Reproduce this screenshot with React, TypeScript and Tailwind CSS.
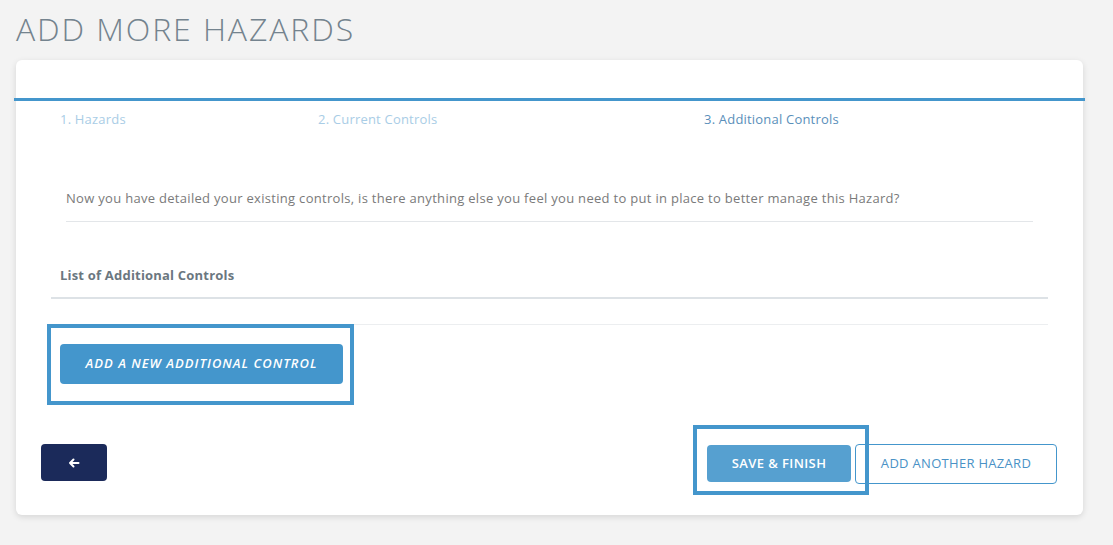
import React from "react";

const font = { fontFamily: '"Open Sans", "Noto Sans", sans-serif' };

const App = () => {
  return (
    <div className="min-h-[545px] w-[1113px] bg-[#f3f3f3] pt-[12px] pl-[16px]" style={font}>
      <h1 className="text-[32px] leading-[34px] font-light tracking-[1.9px] text-[#74838e]">
        ADD MORE HAZARDS
      </h1>

      <div className="relative mt-[14px] w-[1067px] h-[455px] rounded-[6px] bg-white shadow-[0_2px_6px_rgba(0,0,0,0.12)]">
        {/* stepper */}
        <div className="h-[38px]" />
        <div className="-mx-[2px] h-[3px] bg-[#4496cc]" />
        <div className="flex h-[37px] items-center text-[13px] tracking-[0.2px]">
          <span className="ml-[44px] w-[258px] text-[#a9cde6]">1. Hazards</span>
          <span className="w-[386px] text-[#a9cde6]">2. Current Controls</span>
          <span className="text-[#5a8fba]">3. Additional Controls</span>
        </div>

        {/* body */}
        <div className="px-[35px] pt-[51px]">
          <div className="mx-[15px] border-b border-[#e3e6e9] pb-[12px] text-[13px] text-[#7a7a7a] tracking-[0.3px]">
            Now you have detailed your existing controls, is there anything else you feel you need to put in place to better manage this Hazard?
          </div>

          <div className="mt-[44px] border-b-2 border-[#dde2e6] pb-[12px] pl-[9px] text-[13px] font-bold text-[#6b7780] tracking-[0.2px]">
            List of Additional Controls
          </div>
          <div className="mt-[25px] border-t border-[#eceef0]" />

          <div className="-ml-[4px] -mt-[1px] inline-flex border-[4px] border-[#4496cc] pl-[9px] pr-[7px] pt-[16px] pb-[17px]">
            <button className="h-[40px] w-[283px] rounded-[4px] bg-[#4496cc] text-[13px] font-semibold italic uppercase text-white tracking-[1px]">
              Add a new additional control
            </button>
          </div>

          <div className="mt-[39px] flex items-start">
            <button className="-ml-[10px] flex h-[37px] w-[66px] items-center justify-center rounded-[4px] bg-[#1b2a5a] text-white">
              <svg width="12" height="12" viewBox="0 0 12 12" fill="none" stroke="white" strokeWidth="2" strokeLinecap="round" strokeLinejoin="round">
                <path d="M10.5 6H2M5.5 2.5L2 6l3.5 3.5" />
              </svg>
            </button>
            <div className="ml-auto mr-[-9px] flex items-start gap-[4px]">
              <button className="mt-[1px] h-[37px] w-[144px] rounded-[4px] bg-[#56a0d0] text-[13px] font-semibold uppercase text-white tracking-[0.4px]">
                Save &amp; Finish
              </button>
              <button className="h-[40px] w-[202px] rounded-[4px] border border-[#4496cc] bg-white text-[13px] uppercase text-[#4a92c6] tracking-[0.3px]">
                Add another hazard
              </button>
            </div>
          </div>
        </div>

        {/* highlight around save & finish */}
        <div className="pointer-events-none absolute left-[677px] top-[365px] h-[70px] w-[176px] border-[4px] border-[#4496cc]" />
      </div>
    </div>
  );
};

export default App;
